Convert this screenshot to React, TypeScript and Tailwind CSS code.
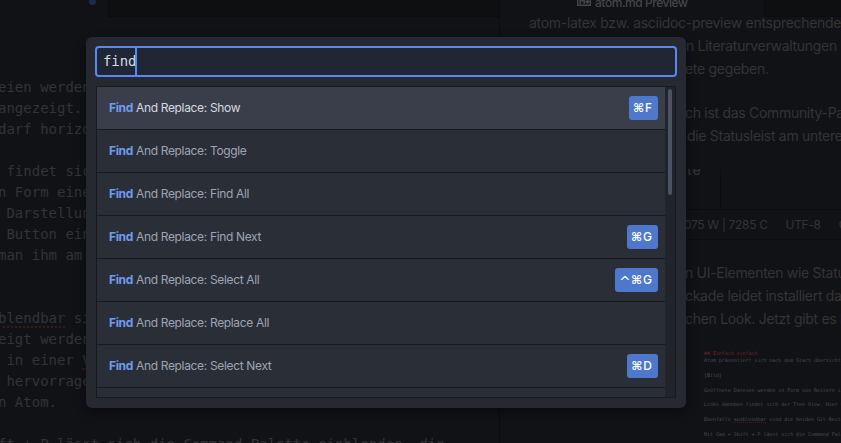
import type { ReactNode } from 'react';

type Command = { name: string; keys?: string };

const commands: Command[] = [
  { name: 'Show', keys: '⌘F' },
  { name: 'Toggle' },
  { name: 'Find All' },
  { name: 'Find Next', keys: '⌘G' },
  { name: 'Select All', keys: '^⌘G' },
  { name: 'Replace All' },
  { name: 'Select Next', keys: '⌘D' },
];

const mono = "font-['DejaVu_Sans_Mono',monospace]";
const sans = "font-['Inter',sans-serif]";

function Misspelled({ children }: { children: ReactNode }) {
  return <span className="border-b-2 border-dotted border-[#431719]">{children}</span>;
}

function EditorPane() {
  const lines: ReactNode[] = [
    'eien werden',
    'angezeigt.',
    'darf horizo',
    '',
    ' findet sic',
    'n Form eine',
    ' Darstellun',
    ' Button ein',
    'man ihm am',
    '',
    '',
    <><Misspelled>blendbar</Misspelled> si</>,
    'eigt werden',
    <> in einer <Misspelled>V</Misspelled></>,
    ' hervorrage',
    'n Atom.',
    '',
    'ft + P lässt sich die Command Palette einblenden, die',
  ];
  return (
    <section className="flex h-full w-[500px] shrink-0 flex-col overflow-hidden border-r border-[#0b0c0e]">
      <div className="flex h-[17px] shrink-0">
        <div className="flex w-[108px] justify-end pr-3">
          <span className="-mt-0.5 size-[7px] rounded-full bg-[#1d2b4b]" />
        </div>
        <div className="grow border-b border-l border-[#0b0c0e] bg-[#0e0f11]" />
      </div>
      <div className={`mt-[60px] -ml-0.5 text-[14px] leading-[21px] whitespace-pre text-[#323438] ${mono}`}>
        {lines.map((line, i) => (
          <div key={i} className="h-[21px]">{line}</div>
        ))}
      </div>
    </section>
  );
}

function PreviewPane() {
  return (
    <section className={`flex h-full grow flex-col overflow-hidden whitespace-nowrap text-[#323438] ${sans}`}>
      <div className="flex h-[17px] shrink-0">
        <div className="flex w-[264px] items-start pl-[77px]">
          <svg viewBox="0 0 14 9" className="mt-[-3px] h-[9px] w-[14px] shrink-0" fill="none" stroke="#44464b">
            <path d="M.7 0v8.3h12.6V0M3.2 7V2l2 2 2-2v5M10.4 1v5M8.6 4l1.8 2 1.8-2" strokeWidth="1.5" />
          </svg>
          <span className="-mt-[5px] ml-1 text-[12px] leading-4 font-medium tracking-[-0.45px] text-[#44464b]">atom.md Preview</span>
        </div>
        <div className="grow border-b border-l border-[#0b0c0e] bg-[#0e0f11]" />
      </div>
      <div className="-mt-[6px] text-[14px] leading-[23px] tracking-[-0.3px]">
        <p className="pl-[29px]">atom-latex bzw. asciidoc-preview entsprechende</p>
        <p className="pl-[186px]">n Literaturverwaltungen w</p>
        <p className="pl-[185px]">ete gegeben.</p>
        <p className="mt-[21px] pl-[185px]">ch ist das Community-Pa</p>
        <p className="pl-[187px]">die Statusleist am untere</p>
      </div>
      <div className="mt-[22px] h-[40px] w-[221px] shrink-0 overflow-hidden border-r border-[#0b0c0e]">
        <div className="-mt-[9px] pl-[187px] text-[14px] leading-[20px] font-medium tracking-[0.9px]">te</div>
      </div>
      <div className="flex h-[31px] shrink-0 items-center gap-[18px] border-y border-[#0b0c0e] pl-[184px] text-[12px] tracking-[-0.33px]">
        <span>075 W | 7285 C</span>
        <span>UTF-8</span>
        <span>G</span>
      </div>
      <div className="mt-[21px] text-[14px] leading-[23px] tracking-[-0.3px]">
        <p className="pl-[185px]">n UI-Elementen wie Statu</p>
        <p className="pl-[185px]">ckade leidet installiert da</p>
        <p className="pl-[185px]">chen Look. Jetzt gibt es h</p>
      </div>
      <div className={`mt-[20px] pl-[204px] text-[5px] leading-[7.35px] tracking-[-0.04px] whitespace-pre text-[#484b51] ${mono}`}>
        <div className="text-[#6e262d]">## Einfach einfach</div>
        <div>Atom präsentiert sich nach dem Start übersichtl</div>
        <div className="mt-[7.35px]">[Bild]</div>
        <div className="mt-[7.35px]">Geöffnete Dateien werden in Form von Reitern in</div>
        <div className="mt-[7.35px]">Links daneben findet sich der Tree View. Hier w</div>
        <div className="mt-[7.35px]">Ebenfalls <span className="underline decoration-[#4b1b1e] decoration-dotted decoration-1 underline-offset-1">ausblendbar</span> sind die beiden Git-Reite</div>
        <div className="mt-[7.35px]">Mit Cmd + Shift + P lässt sich die Command Pale</div>
      </div>
    </section>
  );
}

function Keystroke({ keys }: { keys: string }) {
  return (
    <kbd className={`flex h-6 items-center rounded-[3px] bg-[#4d78cc] pr-[6px] pl-1 text-[12px] font-medium text-white ${sans}`}>
      {keys.split('').map((key) => {
        if (key === '⌘') {
          return <span key={key} className="w-3 font-['DejaVu_Sans',sans-serif] text-[12px] font-bold">{key}</span>;
        }
        if (key === '^') {
          return <span key={key} className="w-3 pt-[3px] font-['DejaVu_Sans',sans-serif] text-[14px] leading-4">{key}</span>;
        }
        return <span key={key}>{key}</span>;
      })}
    </kbd>
  );
}

function CommandPalette() {
  return (
    <div className="absolute top-[37px] left-[86px] flex h-[371px] w-[600px] flex-col gap-[9px] rounded-[6px] bg-[#262930] px-[9px] pt-[9px] pb-[10px] shadow-[0_5px_12px_rgba(0,0,0,0.45)]">
      <div className={`flex h-[31px] shrink-0 rounded-[4px] border-2 border-[#568af2] bg-[#202634] pl-[6px] text-[14px] leading-[26px] tracking-[-0.1px] text-[#d7dae0] ${mono}`}>
        find
        <span className="-ml-px h-full w-0.5 bg-[#568af2]" />
      </div>
      <div className="mx-px flex h-[312px] overflow-hidden border border-[#181a1f] bg-[#21252b]">
        <ul className={`w-[568px] text-[12px] ${sans}`}>
          {commands.map(({ name, keys }, i) => (
            <li
              key={name}
              className={`flex h-[43px] items-center justify-between border-b border-[#181a1f] pr-[7px] pl-3 ${i === 0 ? 'bg-[#3a3e4a] text-[#d7dae0]' : 'bg-[#2a2e36] text-[#9da5b4]'}`}
            >
              <span className="tracking-[-0.34px]"><b className="font-bold text-[#6f9af2]">Find</b> And Replace: {name}</span>
              {keys && <Keystroke keys={keys} />}
            </li>
          ))}
          <li className="h-[43px] bg-[#2a2e36]" />
        </ul>
        <div className="mt-0.5 ml-[3px] h-[106px] w-1 rounded-full bg-[#4b5263]" />
      </div>
    </div>
  );
}

export default function App() {
  return (
    <main className="relative flex h-[443px] w-[841px] overflow-hidden bg-[#111216]">
      <EditorPane />
      <PreviewPane />
      <CommandPalette />
    </main>
  );
}
